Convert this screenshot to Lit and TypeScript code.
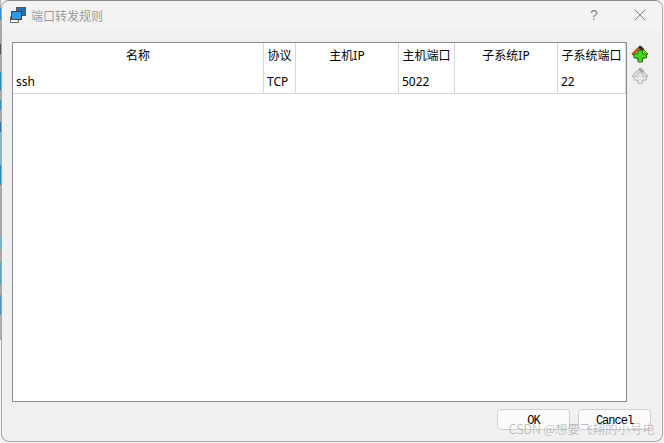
import { LitElement, html, css } from "lit";
import { customElement } from "lit/decorators.js";

const COLS = [
  { label: "名称", cell: "ssh", w: 251 },
  { label: "协议", cell: "TCP", w: 32 },
  { label: "主机IP", cell: "", w: 103 },
  { label: "主机端口", cell: "5022", w: 56 },
  { label: "子系统IP", cell: "", w: 103 },
  { label: "子系统端口", cell: "22", w: 68 },
];

@customElement("app-root")
export class AppRoot extends LitElement {
  static styles = css`
    :host {
      display: flex;
      width: 664px;
      height: 443px;
      background: #f4f4f4;
      font-family: "Noto Sans", "Noto Sans CJK SC", sans-serif;
      color: #000;
      overflow: hidden;
    }
    .strip {
      flex: none;
      width: 1px;
      height: 340px;
      background: linear-gradient(
        to bottom,
        #b0b0b0 0 8px, #2f8fd0 8px 20px, #a8a8a8 20px 44px, #555 44px 54px,
        #a8a8a8 54px 72px, #2a86cc 72px 90px, #a8a8a8 90px 100px, #3a8fc8 100px 110px,
        #a8a8a8 110px 122px, #2f75b8 122px 132px, #86b8d0 132px 165px, #2a86cc 165px 185px,
        #a8a8a8 185px 235px, #6fb0d0 235px 250px, #a8a8a8 250px 262px, #5aa0c8 262px 285px,
        #a8a8a8 285px 295px, #4a90c0 295px 315px, #b0b0b0 315px
      );
    }
    .win {
      position: relative;
      box-sizing: border-box;
      flex: none;
      width: 662px;
      height: 442px;
      background: #f0f0f0;
      border: 1px solid #a8a8a8;
      border-top-color: #8a8a8a;
      border-radius: 8px;
      overflow: hidden;
      display: flex;
      flex-direction: column;
    }
    .title {
      box-sizing: border-box;
      height: 30px;
      flex: none;
      background: #f3f3f3;
      display: flex;
      align-items: center;
      padding: 0 0 2px 7px;
      gap: 4px;
      font-size: 12px;
      color: #9a9a9a;
    }
    .title .name {
      flex: 1;
      font-family: "Noto Sans CJK SC", sans-serif;
    }
    .help {
      width: 14px;
      text-align: center;
      font-family: "Liberation Sans", sans-serif;
      font-size: 14px;
      color: #8c8c8c;
      margin-right: 29px;
    }
    .close {
      margin-right: 16px;
      display: block;
    }
    .body {
      flex: none;
      display: flex;
      padding: 11px 0 0 10px;
      gap: 4px;
    }
    .table {
      box-sizing: border-box;
      width: 615px;
      height: 360px;
      background: #fff;
      border: 1px solid #8a8d94;
      flex: none;
    }
    .row {
      display: flex;
    }
    .head {
      height: 26px;
    }
    .data {
      height: 24px;
      border-bottom: 1px solid #d9d9d9;
    }
    .th {
      box-sizing: border-box;
      flex: none;
      border-right: 1px solid #d9d9d9;
      text-align: center;
      font-size: 12px;
      line-height: 25px;
      white-space: nowrap;
      overflow: hidden;
    }
    .td {
      box-sizing: border-box;
      flex: none;
      border-right: 1px solid #d9d9d9;
      font-size: 12px;
      line-height: 25px;
      padding-left: 3px;
    }
    .tools {
      display: flex;
      flex-direction: column;
      gap: 4px;
      padding-top: 3px;
    }
    .tools svg {
      display: block;
    }
    .foot {
      flex: none;
      display: flex;
      justify-content: flex-end;
      gap: 8px;
      padding: 7px 11px 0 0;
    }
    .btn {
      box-sizing: border-box;
      width: 73px;
      height: 21px;
      background: #fbfbfb;
      border: 1px solid #d0d0d0;
      border-radius: 4px;
      font-family: "Liberation Mono", monospace;
      font-size: 12px;
      letter-spacing: -1px;
      text-align: center;
      line-height: 22px;
    }
    .mark {
      position: absolute;
      right: 7px;
      bottom: 3px;
      font-family: "Noto Sans CJK SC", sans-serif;
      font-size: 12.5px;
      font-weight: 300;
      color: rgba(125, 125, 125, 0.6);
      white-space: nowrap;
    }
  `;

  render() {
    return html`
      <div class="strip"></div>
      <div class="win">
        <div class="title">
          <svg width="18" height="18" viewBox="0 0 18 18">
            <rect x="7.5" y="1.5" width="9" height="8" fill="#2a6fb0" stroke="#555"></rect>
            <rect x="2.5" y="5.5" width="10" height="8" fill="#2b9bea" stroke="#444"></rect>
            <path d="M1.5 10.5v6h8v-3" fill="#fff" stroke="#666"></path>
            <rect x="2.5" y="5.5" width="10" height="8" fill="#2b9bea" stroke="#444"></rect>
          </svg>
          <span class="name">端口转发规则</span>
          <span class="help">?</span>
          <svg class="close" width="12" height="12" viewBox="0 0 12 12">
            <path d="M.5.5l11 11M11.5.5l-11 11" stroke="#808080" stroke-width="1" fill="none"></path>
          </svg>
        </div>
        <div class="body">
          <div class="table">
            <div class="row head">
              ${COLS.map((c) => html`<div class="th" style="width:${c.w}px">${c.label}</div>`)}
            </div>
            <div class="row data">
              ${COLS.map((c) => html`<div class="td" style="width:${c.w}px">${c.cell}</div>`)}
            </div>
          </div>
          <div class="tools">
            <svg width="18" height="18" viewBox="0 0 18 18">
              <path d="M9 1L17 9L9 17L1 9Z" fill="#9ccf3c" stroke="#4a7d14"></path>
              <path d="M8 1.500L1 8.500L2.500 10L9.500 3Z" fill="#e2552a" stroke="#8a3a1a" stroke-width=".6"></path>
              <path d="M8 1L10 0.800L13.500 4.500L11 6L8 3.500Z" fill="#2c2c2c"></path>
              <path d="M7 5.500h4.500v3.500h4v4h-4v4H7v-4H3V9h4z" fill="#46d61e" stroke="#2a7a10"></path>
            </svg>
            <svg width="18" height="18" viewBox="0 0 18 18">
              <path d="M9 1L17 9L9 17L1 9Z" fill="#dcdcdc" stroke="#b0b0b0"></path>
              <path d="M8 1L10 0.800L13.500 4.500L11 6L8 3.500Z" fill="#a8a8a8"></path>
              <path d="M7 6h4.500v3.500h4v3.500h-4v3.500H7v-3.500H3V9.500h4z" fill="#e8e8e8" stroke="#bcbcbc"></path>
            </svg>
          </div>
        </div>
        <div class="foot">
          <div class="btn">OK</div>
          <div class="btn">Cancel</div>
        </div>
        <div class="mark">CSDN @想要飞翔的小号电</div>
      </div>
    `;
  }
}
